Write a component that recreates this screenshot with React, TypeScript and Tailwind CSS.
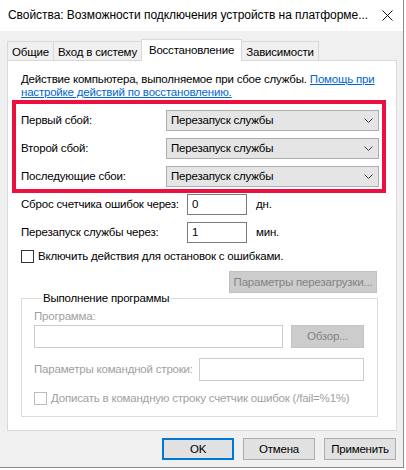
import React from 'react'

const FONT = { fontFamily: '"Liberation Sans", Arial, sans-serif' }

function Chevron(): React.ReactElement {
  return (
    <svg width="9" height="5" viewBox="0 0 9 5" className="shrink-0">
      <path d="M0.5 0.5 L4.5 4.5 L8.5 0.5" fill="none" stroke="#404040" strokeWidth="1" />
    </svg>
  )
}

function Combo({ value }: { value: string }): React.ReactElement {
  return (
    <div className="w-[213px] h-[21px] bg-[#e5e5e5] border border-[#adadad] flex items-center pl-[4px] pr-[5px]">
      <span className="flex-1 whitespace-nowrap">{value}</span>
      <Chevron />
    </div>
  )
}

function Checkbox({ disabled }: { disabled?: boolean }): React.ReactElement {
  return (
    <div
      className={`w-[13px] h-[13px] bg-white border shrink-0 ${
        disabled ? 'border-[#bcbcbc]' : 'border-[#333333]'
      }`}
    />
  )
}

function DialogButton({ label, focused }: { label: string; focused?: boolean }): React.ReactElement {
  return (
    <div
      className={`w-[72px] h-[22px] bg-[#e1e1e1] flex items-center justify-center ${
        focused ? 'border-2 border-[#0078d7]' : 'border border-[#adadad]'
      }`}
    >
      {label}
    </div>
  )
}

export default function App(): React.ReactElement {
  return (
    <div
      className="w-[406px] h-[470px] bg-white flex items-start text-[11.5px] leading-[13px] tracking-[-0.2px] text-black whitespace-nowrap"
      style={FONT}
    >
      {/* Dialog window */}
      <div className="w-[404px] h-[468px] flex flex-col bg-[#f0f0f0] border-r border-b border-[#8a8a8a]">
        {/* Title bar */}
        <div className="h-[31px] bg-white flex items-center pl-[8px] pr-[9px] shrink-0">
          <span className="flex-1 text-[12px] tracking-[-0.05px] overflow-hidden">
            Свойства: Возможности подключения устройств на платформе...
          </span>
          <svg width="11" height="11" viewBox="0 0 11 11" className="mr-[1px]">
            <path d="M0.5 0.5 L10.5 10.5 M10.5 0.5 L0.5 10.5" stroke="#111" strokeWidth="1" />
          </svg>
        </div>

        <div className="flex flex-col pl-[7px] pt-[8px]">
          {/* Tabs */}
          <div className="flex items-end h-[21px] relative z-10">
            <div className="w-[46px] h-[19px] border-t border-l border-[#d9d9d9] flex items-center justify-center pt-[2px]">
              Общие
            </div>
            <div className="w-[88px] h-[19px] border-t border-l border-[#d9d9d9] flex items-center justify-center pt-[2px]">
              Вход в систему
            </div>
            <div className="w-[101px] h-[22px] -mb-px bg-white border-t border-l border-r border-[#d9d9d9] flex items-center justify-center">
              Восстановление
            </div>
            <div className="w-[77px] h-[19px] border-t border-r border-[#d9d9d9] flex items-center justify-center pt-[2px]">
              Зависимости
            </div>
          </div>

          {/* Tab panel */}
          <div className="w-[390px] h-[371px] bg-white border border-[#d9d9d9] flex flex-col">
            <p className="ml-[13px] mt-[12px]">
              Действие компьютера, выполняемое при сбое службы.{' '}
              <span className="text-[#0066cc] underline">
                Помощь при
                <br />
                настройке действий по восстановлению.
              </span>
            </p>

            {/* Failure actions (highlighted) */}
            <div className="ml-[4px] mt-[1px] w-[374px] border-4 border-[#ec0f3f] flex flex-col gap-[7px] pt-[6px] pb-[2px] pl-[5px]">
              {['Первый сбой:', 'Второй сбой:', 'Последующие сбои:'].map((l) => (
                <div key={l} className="flex items-center">
                  <span className="w-[145px]">{l}</span>
                  <Combo value="Перезапуск службы" />
                </div>
              ))}
            </div>

            <div className="flex items-center mt-[1px] ml-[13px]">
              <span className="w-[166px]">Сброс счетчика ошибок через:</span>
              <div className="w-[60px] h-[21px] border border-[#7a7a7a] flex items-center pl-[4px]">0</div>
              <span className="ml-[9px]">дн.</span>
            </div>

            <div className="flex items-center mt-[7px] ml-[13px]">
              <span className="w-[166px]">Перезапуск службы через:</span>
              <div className="w-[60px] h-[21px] border border-[#7a7a7a] flex items-center pl-[4px]">1</div>
              <span className="ml-[9px]">мин.</span>
            </div>

            <div className="flex items-center mt-[7px] ml-[13px] gap-[4px]">
              <Checkbox />
              <span>Включить действия для остановок с ошибками.</span>
            </div>

            <div className="ml-[221px] mt-[8px] w-[148px] h-[22px] bg-[#cccccc] border border-[#bfbfbf] text-[#838383] flex items-center justify-center">
              Параметры перезагрузки...
            </div>

            {/* Program group */}
            <fieldset className="ml-[13px] w-[357px] h-[125px] border border-[#dcdcdc] pl-[12px] -mt-[1px]">
              <legend className="ml-[8px] px-[1px]">Выполнение программы</legend>
              <div className="text-[#a0a0a0] mt-[5px]">Программа:</div>
              <div className="flex items-center mt-[2px] gap-[8px]">
                <div className="w-[249px] h-[23px] border border-[#cccccc]" />
                <div className="w-[73px] h-[23px] bg-[#cccccc] border border-[#c4c4c4] text-[#838383] flex items-center justify-center">
                  Обзор...
                </div>
              </div>
              <div className="flex items-center mt-[10px]">
                <span className="w-[165px] text-[#a0a0a0]">Параметры командной строки:</span>
                <div className="w-[165px] h-[23px] border border-[#cccccc]" />
              </div>
              <div className="flex items-center mt-[11px] gap-[4px]">
                <Checkbox disabled />
                <span className="text-[#a0a0a0]">Дописать в командную строку счетчик ошибок (/fail=%1%)</span>
              </div>
            </fieldset>
          </div>

          {/* Dialog buttons */}
          <div className="w-[390px] flex justify-end gap-[9px] pr-px mt-[7px]">
            <DialogButton label="OK" focused />
            <DialogButton label="Отмена" />
            <DialogButton label="Применить" />
          </div>
        </div>
      </div>
    </div>
  )
}
